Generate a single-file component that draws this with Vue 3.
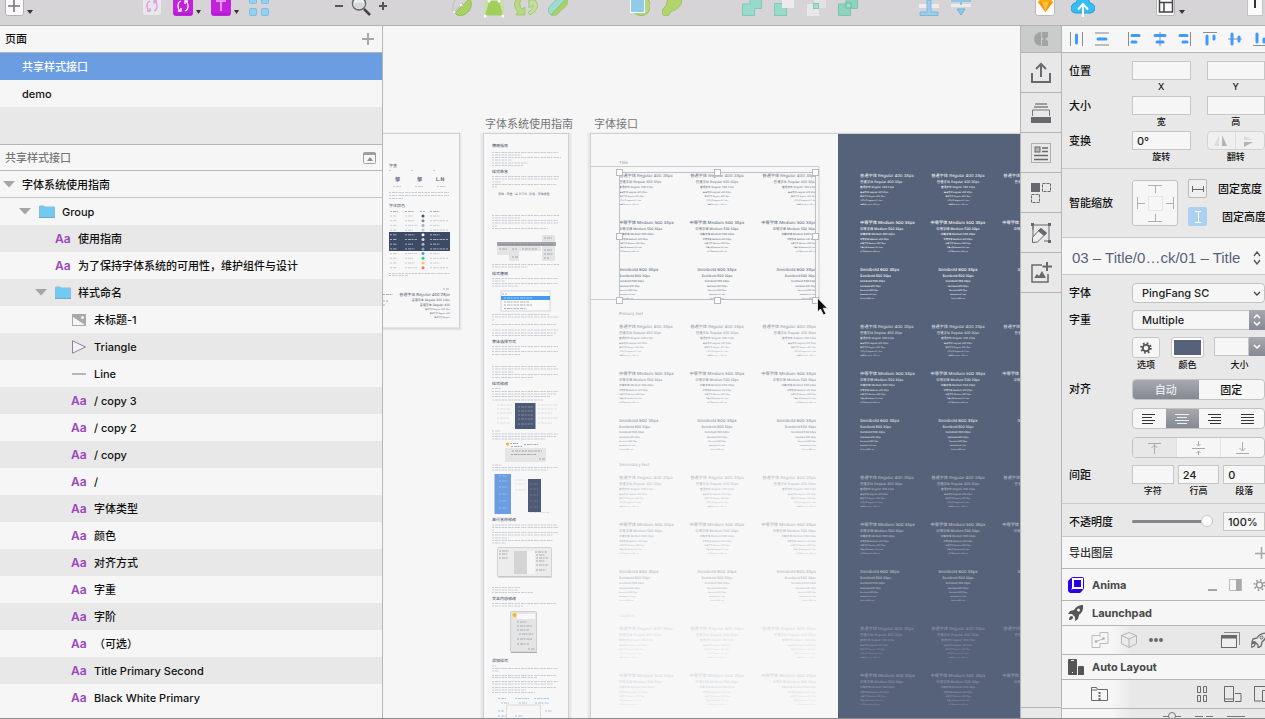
<template>
  <div class="ventana">
    <!-- Barra de herramientas superior -->
    <header class="barra">
      <div class="grupo g-insertar">
        <button title="Insert">
          <svg width="29" height="18">
            <rect x="0.5" y="-6" width="18" height="21.500" rx="2" fill="#fafafa" stroke="#b4b2b5" />
            <path d="M9 0v12M3 6h12" stroke="#77777a" stroke-width="1.600" />
            <path d="M22 10h6l-3 4z" fill="#333" />
          </svg>
        </button>
      </div>
      <div class="grupo g-simbolos">
        <button title="Symbol" disabled>
          <svg width="20" height="18">
            <rect x="0" y="-6" width="18" height="21" rx="2" fill="#e9e7ea" />
            <g fill="none" stroke="#d897dc" stroke-width="1.300">
              <path d="M7 1q-3 1-3 5q0 3 2 5M4 11h3V8M11 11q3-1 3-5q0-3-2-5M14 1h-3v3" />
            </g>
          </svg>
        </button>
        <button title="Create symbol">
          <svg width="28" height="18">
            <rect x="0" y="-6" width="20" height="22" rx="3" fill="#c322dc" />
            <path d="M1 14h18" stroke="#a31abc" />
            <path d="M8 1q-3 1-3 5q0 3 2 5M5 11h3V8M12 11q3-1 3-5q0-3-2-5M15 1h-3v3" fill="none" stroke="#fff" stroke-width="1.300" />
            <path d="M23 10h5l-2.500 4z" fill="#333" />
          </svg>
        </button>
        <button title="Text style">
          <svg width="28" height="18">
            <rect x="0" y="-6" width="20" height="22" rx="3" fill="#c322dc" />
            <path d="M1 14h18" stroke="#a31abc" />
            <path d="M5 1h10M10 1v10" stroke="#f0b8f6" stroke-width="1.500" />
            <path d="M23 10h5l-2.500 4z" fill="#333" />
          </svg>
        </button>
        <button title="Grid">
          <svg width="20" height="18" fill="#93d0ef" stroke="#77bfe4">
            <rect x="0.500" y="-4" width="7" height="7.500" rx="1" />
            <rect x="12.500" y="-4" width="7" height="7.500" rx="1" />
            <rect x="0.500" y="8.500" width="7" height="7" rx="1" />
            <rect x="12.500" y="8.500" width="7" height="7" rx="1" />
          </svg>
        </button>
      </div>
      <div class="grupo g-zoom">
        <button title="Zoom out"><svg width="8" height="18"><path d="M0 6h8" stroke="#555" stroke-width="2" /></svg></button>
        <button title="Zoom">
          <svg width="20" height="18">
            <circle cx="8" cy="3.500" r="6.500" fill="#eceef0" stroke="#666" stroke-width="1.500" />
            <path d="M2 4q6-3 12 0q-1 5-6 5q-5 0-6-5" fill="#d5d9dc" />
            <path d="M13 9l6 6" stroke="#444" stroke-width="2.500" />
          </svg>
        </button>
        <button title="Zoom in"><svg width="8" height="18"><path d="M0 6h8M4 2v8" stroke="#555" stroke-width="2" /></svg></button>
      </div>
      <div class="grupo g-formas">
        <button title="Edit">
          <svg width="20" height="18">
            <path d="M3 13L18 -2Q21 5 17 11Q12 17 5 15z" fill="#a9d165" stroke="#93bf54" />
            <path d="M1 11Q0 4 3 0M2 12l9-9" fill="none" stroke="#bbb" />
            <circle cx="2" cy="12" r="1.500" fill="#fff" stroke="#bbb" stroke-width="0.500" />
            <circle cx="9" cy="5" r="1.500" fill="#fff" stroke="#bbb" stroke-width="0.500" />
          </svg>
        </button>
        <button title="Transform">
          <svg width="20" height="18">
            <rect x="0" y="-2" width="20" height="17" fill="#c9ddb0" />
            <path d="M1 15.500L5 1h10l4 14.500z" fill="#a2cf5c" />
            <g fill="#fff"><circle cx="1" cy="16" r="1.500" /><circle cx="19" cy="16" r="1.500" /><circle cx="5" cy="1" r="1.500" /><circle cx="15" cy="1" r="1.500" /></g>
          </svg>
        </button>
        <button title="Rotate">
          <svg width="20" height="18" class="abierto">
            <path d="M2 -3Q-5 5 2 12L0 15h9V7L6 9Q2 5 5 -1z" fill="#b6d981" stroke="#94c24e" stroke-width="0.700" />
            <path d="M13 0h6Q26 8 14 15l-2-3Q18 9 17 5l-4 3z" fill="#c4dfa0" stroke="#94c24e" stroke-width="0.700" />
          </svg>
        </button>
        <button title="Flatten">
          <svg width="20" height="18">
            <path d="M1 13Q-2 8 7 1L12 -5L20 -3L3 15z" fill="#9cdcd0" stroke="#78bdb0" stroke-width="0.700" />
            <path d="M3 15L20 -3Q21 6 13 10Q9 17 3 15" fill="#a9d165" stroke="#93bf54" stroke-width="0.700" />
          </svg>
        </button>
      </div>
      <div class="grupo g-mascara">
        <button title="Mask">
          <svg width="20" height="18">
            <circle cx="11" cy="6" r="9.500" fill="#b4d77c" stroke="#93bf54" />
            <rect x="0.500" y="-5" width="14" height="17.500" fill="#91cbea" stroke="#fff" />
          </svg>
        </button>
        <button title="Scale">
          <svg width="20" height="18"><path d="M6 -3h13q3 8-6 13q-5 1-6 5Q1 17 0 13Q0 8 4 6z" fill="#b1d46f" stroke="#93bf54" stroke-width="0.700" /></svg>
        </button>
      </div>
      <div class="grupo g-booleanas">
        <button title="Union"><svg width="20" height="18"><path d="M8 -4h11.500V8.500H12.500V15.500H.5V4H8z" fill="#98d9c9" stroke="#7fcab8" /></svg></button>
        <button title="Subtract"><svg width="20" height="18"><rect x="0.500" y="3.500" width="12" height="12" fill="#98d9c9" stroke="#7fcab8" /><rect x="8" y="-4" width="12" height="12" fill="#ebebeb" /></svg></button>
        <button title="Intersect"><svg width="20" height="18"><rect x="1" y="4" width="12" height="12" fill="#e8e8e8" /><rect x="8" y="-4" width="12" height="12" fill="#e2e2e2" /><rect x="7.500" y="3.500" width="5" height="5" fill="#a8dccf" stroke="#7fcab8" /></svg></button>
        <button title="Difference"><svg width="20" height="18"><path d="M8 -4h11.500V8.500H12.500V15.500H.5V4H8z" fill="#8fd3be" stroke="#7cc6ac" /><path d="M8 3h5v5H8z" fill="#a5ddce" stroke="#68b99f" /></svg></button>
      </div>
      <div class="grupo g-orden">
        <button title="Forward"><svg width="20" height="18"><path d="M0 4h20v4H0z" fill="#ececec" /><path d="M8 0h4v12h7v3.500H1V12h7z" fill="#9dcdeb" stroke="#7db9dd" /></svg></button>
        <button title="Backward"><svg width="20" height="18"><path d="M0 4h20v3H0z" fill="#ececec" /><path d="M0 1h20M10 0v5" stroke="#8fc6e8" stroke-width="2" /><path d="M6 9h8l-4 6z" fill="#8fc6e8" stroke="#70b1da" /></svg></button>
      </div>
      <div class="grupo g-nube">
        <button title="Sketch">
          <svg width="20" height="18">
            <rect x="0.500" y="-6" width="19" height="21.500" rx="2" fill="#fafafa" stroke="#bbb9bc" />
            <path d="M3 2L6 -2h9l3 4l-7.500 10z" fill="#fdad00" /><path d="M3 2h15l-7.500 10z" fill="#f7941d" /><path d="M7 2h7l-3.500 9z" fill="#fdc33a" />
          </svg>
        </button>
        <button title="Cloud">
          <svg width="24" height="18">
            <path d="M5 13Q0 13 0 8Q1 3 5 3Q7 -4 13 -3Q18 -2 19 3Q24 4 24 9Q23 13 19 13z" fill="#36bdf6" stroke="#239fdb" />
            <path d="M12 17V5M7 9.500L12 4l5 5.500" fill="none" stroke="#fff" stroke-width="2" />
          </svg>
        </button>
      </div>
      <div class="grupo g-vista">
        <button title="View">
          <svg width="30" height="18">
            <rect x="0.500" y="-6" width="18" height="21.500" rx="2" fill="#fafafa" stroke="#b4b2b5" />
            <path d="M3.500 -2v14h13V-2M3.500 2.500h13M8 2v10" fill="none" stroke="#444" stroke-width="1.500" />
            <path d="M23 10h6l-3 4z" fill="#333" />
          </svg>
        </button>
      </div>
      <div class="grupo g-exportar">
        <button title="Export">
          <svg width="18" height="18"><rect x="0.500" y="-6" width="15" height="21.500" fill="#fafafa" stroke="#c4c2c5" /><path d="M8 -2v10" stroke="#333" stroke-width="2" /></svg>
        </button>
      </div>
    </header>

    <main class="cuerpo">
      <!-- Panel izquierdo: páginas y capas -->
      <aside class="lateral">
        <div class="cabecera">
          <span>页面</span>
          <button title="Add page"><svg width="12" height="12"><path d="M6 0v12M0 6h12" stroke="#a8a8a8" stroke-width="2" /></svg></button>
        </div>
        <ul class="paginas">
          <li class="activa">共享样式接口</li>
          <li>demo</li>
        </ul>
        <div class="cabecera capas-cabecera">
          <span>共享样式接口</span>
          <button title="Collapse">
            <svg width="13" height="12"><rect x="0.500" y="0.500" width="12" height="11" rx="1" fill="none" stroke="#a0a0a0" /><path d="M0 2h13" stroke="#a0a0a0" stroke-width="2" /><path d="M4 9h6L7 5z" fill="#8e8e8e" /></svg>
          </button>
        </div>
        <ul class="capas">
          <li v-for="(capa, i) in capas" :key="i" class="capa" :class="['nivel-' + capa.nivel, { par: i > 1 && i % 2 === 0 }]">
            <span class="flecha"><svg v-if="capa.abierta" width="12" height="7"><path d="M0 0h12L6 6.500z" fill="#a5a5a5" /></svg></span>
            <span v-if="capa.tipo" class="icono">
              <svg v-if="capa.tipo === 'grupo'" width="16" height="13">
                <path d="M0.500 12V1H5l1 1h9.500v10z" fill="#71caf3" stroke="#8abfdc" /><path d="M0 12.500h16" stroke="#6aa9c8" />
              </svg>
              <svg v-else-if="capa.tipo === 'imagen'" width="16" height="12">
                <rect x="1" y="0" width="14" height="12" fill="#a9a9a9" /><path d="M2 3l12 8H2z" fill="#f6f6f6" /><circle cx="11.500" cy="3.500" r="1.500" fill="#f6f6f6" />
              </svg>
              <svg v-else-if="capa.tipo === 'triangulo'" width="16" height="14"><path d="M1.500 0.800v12.400L14.500 7z" fill="#f2f2f4" stroke="#8f7f9f" /></svg>
              <svg v-else-if="capa.tipo === 'linea'" width="16" height="2"><path d="M1 1h14" stroke="#a0a0a6" stroke-width="1.500" /></svg>
              <b v-else>Aa</b>
            </span>
            <span class="nombre">{{ capa.nombre }}</span>
          </li>
        </ul>
      </aside>

      <!-- Lienzo con las mesas de trabajo -->
      <section class="lienzo">
        <svg class="dibujo" width="100%" height="100%">
          <g transform="translate(-383 -26)">
            <text class="mesa-nombre" x="485" y="128">字体系统使用指南</text>
            <text class="mesa-nombre" x="594" y="128">字体接口</text>

            <!-- Mesa recortada por la izquierda -->
            <rect class="halo" x="370" y="134" width="90" height="195" />
            <rect class="mesa" x="370" y="133.500" width="89.500" height="194.500" />
            <g class="mini">
              <text x="389" y="166.500" font-size="4">字重</text>
              <path class="tenue" d="M389 170.500h3M411 170.500h3M433 170.500h3" />
              <text x="395" y="181" font-size="5" font-weight="700">邹</text>
              <text x="417" y="181" font-size="5" font-weight="700">邹</text>
              <text x="436" y="181" font-size="5" font-weight="700">L.N</text>
              <path class="tenue" d="M393 186.500h8M415 186.500h8M437 186.500h9M389 192.500h60M389 195.500h60M389 198.500h14M389 273.500h61M389 275.500h19" />
              <text x="389" y="207" font-size="4">字体颜色</text>
              <rect x="389" y="232" width="61" height="19" fill="#3c4a66" />
              <g v-for="(color, i) in colores" :key="color + i">
                <path class="tenue" :class="{ claro: i > 3 && i < 8 }" :stroke="i > 8 ? color : null" :d="`M390 ${216 + i * 4.7}h7M405 ${216 + i * 4.7}h${8 + (i % 3) * 2}M430 ${216 + i * 4.7}h${10 + (i % 2) * 8}`" />
                <circle cx="423" :cy="216 + i * 4.7" r="1.500" :fill="color" />
              </g>
              <path class="tenue fuerte" d="M390 211.500h8M405 211.500h9M420 211.500h5M430 211.500h10M443 289h6M383 294.500h10M383 301h5M383 305h2" />
              <g text-anchor="end">
                <text x="450" y="296" font-size="4">普通字体 Regular 400 28px</text>
                <text x="450" y="301" font-size="3">普通字体 Regular 400 24px</text>
                <text x="450" y="306" font-size="3">普通字体 Regular 400</text>
                <text x="450" y="310" font-size="2">普通字体 Regular 400 18px</text>
                <text x="450" y="314" font-size="2">普通字体 Regular 400</text>
                <text x="450" y="318" font-size="2">普通字体 Regular</text>
              </g>
            </g>

            <!-- Guía de uso -->
            <rect class="halo" x="482" y="134" width="88" height="620" />
            <rect class="mesa" x="483.500" y="133.500" width="85" height="620" />
            <g class="mini">
              <text v-for="t in titulos" :key="t.y" x="492" :y="t.y" font-size="4" font-weight="500">{{ t.texto }}</text>
              <path v-for="r in renglones" :key="r[0]" class="tenue" :d="`M492 ${r[0]}H${r[1]}`" />
              <text x="498" y="195" font-size="3">字体 · 字重 · 以 P/T/S · 颜色 · 字体类型</text>

              <path d="M497 243h14v12h-14zM509 243h10v18h-10zM519 243h22v8h-22zM542 235h13v26h-13z" fill="#e4e4e4" />
              <path d="M497 242h59v4h-59z" fill="#a3a5a8" />
              <path class="tenue fuerte" d="M499 244.500h54M499 249h8M512 249h5M522 249h16M544 238h8M544 250h8M544 254h9M544 258h5M512 257h6" />

              <rect x="501" y="291" width="49" height="20" fill="#f9f9f9" stroke="#d5d5d5" />
              <rect x="501" y="296" width="49" height="4" fill="#459bef" />
              <path class="tenue fuerte" d="M502 294h5M504 302h25M504 305h29M504 308.500h23" />
              <path class="tenue claro" d="M504 298h28" />

              <g>
                <rect x="515" y="403" width="20.500" height="26" fill="#4d5a75" />
                <path class="tenue claro bajo" d="M518 407h15M518 411h15M518 415h15M518 419h15M518 424h15" />
                <path class="tenue bajo" d="M497 405h15M497 409h14M497 413h15M497 418h12M497 423h14M538 405h20M538 409h19M538 413h14M538 418h20M538 423h14" />
              </g>

              <circle cx="507.500" cy="444" r="1.500" fill="#ffad18" />
              <path class="tenue fuerte" d="M510 443.500h8M511 446.500h11M524 444.500h14" />
              <rect x="505" y="448" width="41" height="14" fill="#e5e5e5" />
              <path class="tenue fuerte" d="M512 451h30M511 454.500h25M539 459h6" />

              <rect x="494.500" y="474" width="16.500" height="40" fill="#6b9ee0" />
              <path class="tenue claro bajo" d="M499 476h8M499 481h8M499 487h8M499 494h8M499 501h8M499 508h8" />
              <rect x="528" y="479" width="13" height="33" fill="#4d5a75" />
              <path class="tenue bajo" d="M515 480h11M515 484h11M515 490h11M530 512.500h20" />
              <path class="tenue bajo" d="M530 484h9M530 489h9M530 495h9M530 501h9M530 507h9" />

              <rect x="497.500" y="547.500" width="54" height="29" rx="1" fill="#ececec" stroke="#d2d2d2" />
              <rect x="514" y="551" width="13" height="23" fill="#d4d4d4" />
              <path d="M527 551h8v23h-8z" fill="#f6f6f6" />
              <path class="tenue fuerte" d="M499 551h10M499 554h8M499 558h9M535 552h12M536 555h9M536 558h12M536 561h9M536 565h12M536 570h10" />
              <path d="M498 577h54" stroke="#bcbcbc" />

              <rect x="510.500" y="611.500" width="26" height="40.500" rx="1" fill="#e5e5e5" stroke="#cfcfcf" />
              <rect x="517" y="614" width="18" height="5" fill="#f8f8f8" />
              <circle cx="514.500" cy="615" r="2" fill="#f5b819" />
              <path class="tenue fuerte" d="M517 622h10M517 626h16M517 630h12M519 634h14M517 639h15M517 644h12M528 649h7" />
              <path d="M511 652.500h26" stroke="#aaa" />

              <path class="tenue azul" d="M498 698.500h8M515 698.500h14M534 698.500h15M501 703h8M519 703h8M535 703h14M498 711h6M545 711h7M498 716h9M515 716h8" />
              <path d="M506.500 718v-13h34v13" fill="none" stroke="#dcdcdc" />
            </g>

            <!-- Mesa de estilos de texto, a escala 1:9 -->
            <rect class="halo" x="589" y="134" width="900" height="620" />
            <rect class="mesa" x="590.500" y="133.500" width="900" height="620" />
            <rect x="838" y="134" width="900" height="620" fill="#56627a" />
            <svg class="tipos" x="591" y="134" width="900" height="600" viewBox="0 0 8100 5400">
              <g v-for="(s, i) in secciones" :key="s.nombre">
                <text :x="252" :y="268 + i * 1359" font-size="38" :fill="s.etiqueta">{{ s.nombre }}</text>
                <g v-for="c in columnas" :key="c.x" :text-anchor="c.ancla" :fill="c.oscura ? '#fff' : '#46536b'" :opacity="c.oscura ? s.claridad : s.opacidad">
                  <template v-for="(f, j) in familias" :key="f.nombre">
                    <text
                      v-for="(t, k) in tamanos.slice(0, c.filas)"
                      :key="t.px"
                      :x="c.x"
                      :y="386 + i * 1359 + j * 423 + t.y"
                      :font-size="t.px"
                      :font-weight="f.peso"
                    >{{ f.nombre }} {{ t.px }}px</text>
                  </template>
                </g>
              </g>
            </svg>

            <!-- Guías y selección -->
            <path d="M591 166.500h228v133H591" fill="none" stroke="#c9ccd2" />
            <rect x="619.500" y="172.500" width="196" height="127" fill="none" stroke="#bcbfc6" />
            <rect v-for="(m, i) in manijas" :key="i" :x="m[0]" :y="m[1]" width="6" height="6" fill="#fdfdfd" stroke="#b9b9bd" />
            <path d="M817.500 298v14l3-3l3 6l2.500-1.200l-2.800-5.600h4.300z" fill="#0a0a0a" stroke="#fff" stroke-width="0.800" />
          </g>
        </svg>
      </section>

      <!-- Columna de complementos -->
      <nav class="plugins">
        <button class="marca" title="Craft"><svg width="16" height="16"><path d="M8 1v14A7 7 0 0 1 8 1M9 1h6v5l-3 2l3 2v5H9V9l2-1l-2-1z" fill="#a3a3a3" /></svg></button>
        <button title="Upload"><svg width="22" height="22" fill="none" stroke="#68696c" stroke-width="2"><path d="M2 11v9h18v-9M11 15V2M6 7l5-5l5 5" /></svg></button>
        <button title="Stack"><svg width="22" height="22"><path d="M5 2h12M4 5h14" stroke="#9c9c9e" stroke-width="1.800" /><path d="M2.500 14V8h17v6" fill="none" stroke="#77787b" /><path d="M1 15h20v6H1z" fill="#68696c" /></svg></button>
        <button title="Data"><svg width="22" height="22"><rect x="1.500" y="1.500" width="19" height="19" fill="none" stroke="#77787b" stroke-dasharray="1 1" /><rect x="5" y="5" width="5" height="5" fill="#b5b5b6" stroke="#68696c" /><path d="M12 6h6M12 9.500h6M4 13.500h14M4 17.500h14" stroke="#68696c" stroke-width="1.300" /></svg></button>
        <button title="Duplicate"><svg width="22" height="22"><path d="M1 1h9v9H1z" fill="#68696c" /><path d="M12.500 1.500h8v8h-8zM1.500 12.500h8v8h-8z" fill="none" stroke="#68696c" stroke-dasharray="3 1" /></svg></button>
        <button title="Edit"><svg width="22" height="22"><path d="M3 8V3h16v16h-5M3 3v12" fill="none" stroke="#68696c" /><path d="M1 1h3v3H1zM18 1h3v3h-3zM18 18h3v3h-3z" fill="#68696c" /><path d="M2.500 20.500v-5l8-9l6 4.500l-9 9z" fill="#eee" stroke="#68696c" /><path d="M8 9l3-3l6 5l-3 3z" fill="#68696c" /></svg></button>
        <button title="Add image"><svg width="22" height="22"><path d="M12 3H2v17h16v-8" fill="none" stroke="#68696c" stroke-width="1.500" /><path d="M17 0v9M12.500 4.500H22" stroke="#68696c" stroke-width="2" /><path d="M4 16l3-4l2 2l3-5l4 7z" fill="#68696c" /></svg></button>
        <div class="pie"></div>
      </nav>

      <!-- Inspector -->
      <aside class="inspector">
        <div class="alinear">
          <button title="Distribute horizontally"><svg width="14" height="14"><path d="M0.500 0v14M12.500 0v14" stroke="#8e8e90" /><path d="M6.500 3v8" class="trazo" /></svg></button>
          <button title="Distribute vertically"><svg width="14" height="14"><path d="M0 1h14M0 13h14" stroke="#aaa" stroke-width="1.500" /><path d="M3 7h8" class="trazo" /></svg></button>
          <i></i>
          <button title="Align left"><svg width="14" height="14"><path d="M0.500 0v14" stroke="#8e8e90" /><path d="M4 3.500h7M4 10h4" class="trazo" /></svg></button>
          <button title="Align center"><svg width="14" height="14"><path d="M7 0v14" stroke="#8e8e90" /><path d="M2 3.500h10M4 10h6" class="trazo" /></svg></button>
          <button title="Align right"><svg width="14" height="14"><path d="M12.500 0v14" stroke="#8e8e90" /><path d="M2 3.500h7M5 10h4" class="trazo" /></svg></button>
          <button title="Align top"><svg width="14" height="14"><path d="M0 0.500h14" stroke="#8e8e90" /><path d="M4 4v8M11 4v3" class="trazo" /></svg></button>
          <button title="Align middle"><svg width="14" height="14"><path d="M0 7h14" stroke="#8e8e90" /><path d="M4 2v10M11 5v4" class="trazo" /></svg></button>
          <button title="Align bottom"><svg width="14" height="14"><path d="M0 13.500h14" stroke="#8e8e90" /><path d="M4 2v8M11 7v3" class="trazo" /></svg></button>
        </div>

        <div class="seccion posicion">
          <div class="fila">
            <span class="rotulo">位置</span>
            <label class="campo"><input type="text" /><small>X</small></label>
            <label class="campo"><input type="text" /><small>Y</small></label>
          </div>
          <div class="fila">
            <span class="rotulo">大小</span>
            <label class="campo"><input type="text" /><small>宽</small></label>
            <label class="campo"><input type="text" /><small>高</small></label>
          </div>
          <div class="fila">
            <span class="rotulo">变换</span>
            <label class="campo"><input type="text" value="0°" /><small>旋转</small></label>
            <div class="campo">
              <div class="voltear">
                <button title="Flip horizontal"><svg width="14" height="12"><path d="M5 0v11H0z" fill="#dcdcdc" /><path d="M8 0v11h5z" fill="#b4b4b4" /></svg></button>
                <button title="Flip vertical"><svg width="12" height="12"><path d="M0 5h9L0 1z" fill="#dcdcdc" /><path d="M0 7h9l-9 5z" fill="#b4b4b4" /></svg></button>
              </div>
              <small>翻转</small>
            </div>
          </div>
        </div>

        <div class="seccion escala">
          <span class="rotulo">智能缩放</span>
          <button class="anclas" title="Pin edges">
            <svg width="44" height="44" fill="none" stroke="#b0b0b0"><rect x="15.500" y="15.500" width="14" height="14" stroke="#e6e6e6" /><path d="M15 4.500h14M22.500 5v7M15 40.500h14M22.500 33v7M4.500 16v12M5 22.500h7M40.500 16v12M33 22.500h7" /></svg>
          </button>
          <div class="fijar">
            <div><button title="Fix width"><svg width="14" height="14"><path d="M1.500 4v6M12.500 4v6M2 7.500h10" stroke="#666" /></svg></button><span>固定宽度</span></div>
            <div><button class="puesto" title="Fix height"><svg width="14" height="14"><path d="M4 1.500h6M4 12.500h6M7.500 2v10" stroke="#fff" /></svg></button><span class="alto">固定高度</span></div>
          </div>
        </div>

        <button class="estilo">
          <span>03 – Title/0…ck/01 – Title</span>
          <svg width="8" height="14"><path d="M1 5l3-4l3 4M1 9l3 4l3-4" fill="none" stroke="#555" stroke-width="1.300" /></svg>
        </button>

        <div class="seccion texto">
          <div class="fila">
            <label class="rotulo" for="fuente">字体</label>
            <div class="lista">
              <select id="fuente"><option>PingFang SC</option></select>
              <svg class="chevron" width="8" height="6"><path d="M1 1l3 3l3-3" fill="none" stroke="#444" stroke-width="1.300" /></svg>
            </div>
          </div>
          <div class="fila">
            <label class="rotulo" for="peso">字重</label>
            <div class="lista">
              <select id="peso" class="junto"><option>Multiple</option></select>
              <span class="pulsador"><svg width="8" height="14"><path d="M1 5l3-3l3 3M1 9l3 3l3-3" fill="none" stroke="#fff" stroke-width="1.500" /></svg></span>
            </div>
          </div>
          <div class="fila opciones">
            <span class="rotulo"></span>
            <div class="campo opcion">
              <button title="Options"><svg width="12" height="12"><circle cx="6" cy="6" r="4.800" fill="none" stroke="#555" stroke-width="2" stroke-dasharray="1.800 1.970" /><circle cx="6" cy="6" r="3.200" fill="none" stroke="#555" stroke-width="1.800" /></svg></button>
              <small>选项</small>
            </div>
            <div class="campo color"><button title="Color"><i></i></button><small>颜色</small></div>
            <div class="campo tamano">
              <div class="lista"><input id="tamano" type="text" /><span class="pulsador"><svg width="8" height="6"><path d="M1 1l3 3l3-3" fill="none" stroke="#fff" stroke-width="1.500" /></svg></span></div>
              <label for="tamano"><small>大小</small></label>
            </div>
          </div>
          <div class="fila">
            <span class="rotulo">对齐</span>
            <div class="segmentos">
              <div class="segmento"><button class="puesto">自动</button><button>固定</button></div>
              <div class="segmento">
                <button title="Left"><svg width="14" height="12"><path d="M0 1.500h13M0 4.500h10M0 7.500h13M0 10.500h11" stroke="#333" /></svg></button>
                <button class="puesto" title="Center"><svg width="14" height="12"><path d="M0 1.500h14M2 4.500h10M0 7.500h14M2 10.500h10" stroke="#eee" /></svg></button>
                <button title="Right"><svg width="14" height="12"><path d="M0 1.500h13M3 4.500h10M0 7.500h13M2 10.500h11" stroke="#333" /></svg></button>
                <button title="Justify"><svg width="14" height="12"><path d="M0 1.500h13M0 4.500h13M0 7.500h13M0 10.500h13" stroke="#333" /></svg></button>
              </div>
              <div class="segmento apagado">
                <button title="Top"><svg width="14" height="14"><path d="M0 2.500h13M6.500 13V3M3.500 7l3-3l3 3" /></svg></button>
                <button title="Middle"><svg width="14" height="14"><path d="M0 7.500h13M6.500 0v5M6.500 10v5M4.500 3l2 2l2-2M4.500 12l2-2l2 2" /></svg></button>
                <button title="Bottom"><svg width="14" height="14"><path d="M0 12.500h13M6.500 1v9M3.500 7l3 3l3-3" /></svg></button>
              </div>
            </div>
          </div>
          <div class="fila espaciado">
            <span class="rotulo">间距</span>
            <label class="campo"><input type="text" /><small>字符</small></label>
            <label class="campo"><input type="text" value="24" /><small>行高</small></label>
            <label class="campo"><input type="text" value="0" /><small>段落</small></label>
          </div>
        </div>

        <div class="seccion opacidad">
          <label class="rotulo" for="opacidad">不透明度</label>
          <input id="opacidad" type="range" min="0" max="100" value="100" />
          <input type="text" value="100%" aria-label="不透明度" />
        </div>

        <div class="linea exportar"><span>导出图层</span><button title="Add export"><svg width="14" height="12"><path d="M6.500 0v12M0 6.500h14" stroke="#a5a5a5" stroke-width="1.500" /></svg></button></div>

        <div class="linea anima">
          <svg width="16" height="16"><path d="M3 1v11l1 1h11l-3 3H2l-2-2V4z" fill="#2900e8" /><rect x="3.500" y="0.500" width="12" height="12" rx="1" fill="#fff" stroke="#2900e8" /><path d="M6 3h7v7H6z" fill="#2900e8" /></svg>
          <b>Anima</b>
          <div class="acciones">
            <button title="Minimize"><svg width="10" height="12"><path d="M0 11h9" stroke="#a5a5a5" stroke-width="2" /></svg></button>
            <button title="Panel"><svg width="13" height="12"><rect x="0.500" y="0.500" width="12" height="11" fill="#f6f6f6" stroke="#bbb" /><path d="M7 0h5v12H7z" fill="#a9a9a9" /></svg></button>
            <button title="Settings"><svg width="13" height="12"><circle cx="6.500" cy="6" r="3" fill="none" stroke="#999" stroke-width="1.500" /><circle cx="6.500" cy="6" r="5" fill="none" stroke="#999" stroke-width="2" stroke-dasharray="1.500 2.427" /></svg></button>
          </div>
        </div>
        <div class="linea">
          <svg width="16" height="16"><path d="M15 0q-6 0-9 5L2 6L0 9l4 0l3 3l0 4l3-2l1-4q5-4 4-10M4 11q-3 0-3 4q4 0 4-3z" fill="#555" /><circle cx="10.500" cy="5" r="1.500" fill="#f6f6f6" /></svg>
          <b>Launchpad</b>
        </div>
        <div class="utiles">
          <button title="Link"><svg width="18" height="16" fill="none" stroke="#bbb"><path d="M9 5V0.500h8v11H9M9 3.500H1v12h8v-4M5 9.500l8-3" /><circle cx="5" cy="9.500" r="1" fill="#aaa" /><circle cx="12.500" cy="6.500" r="1" fill="#aaa" /></svg></button>
          <button title="Component"><svg width="18" height="16" fill="none" stroke="#b5b5b5"><path d="M9 0.500l7.500 3v8l-7.500 4l-7.500-4v-8zM1.500 3.500l7.500 3.500l7.500-3.500M9 7v8" /></svg></button>
          <button title="More"><svg width="14" height="6" fill="#68696c"><circle cx="2" cy="3" r="2" /><circle cx="7" cy="3" r="2" /><circle cx="12" cy="3" r="2" /></svg></button>
          <div class="final">
            <button title="Preview"><svg width="19" height="16"><path d="M3 0.500h15.500V13" fill="none" stroke="#8b8b8d" /><rect x="0.500" y="3.500" width="15" height="12" fill="#eee" stroke="#68696c" /><path d="M0 5h16" stroke="#68696c" stroke-width="3" /></svg></button>
            <button title="Launch"><svg width="16" height="16"><path d="M15 1q-6 0-9 5L2 7L1 10h3l3 3v3l3-2l1-4q5-4 4-9M3 11q-3 0-3 4q4 0 4-3z" fill="none" stroke="#68696c" stroke-width="1.300" /><circle cx="10.500" cy="5.500" r="1.500" fill="none" stroke="#68696c" /></svg></button>
          </div>
        </div>
        <div class="linea">
          <svg width="16" height="16"><path d="M1 0h7q1 0 1 1v15H1q-1 0-1-1V1q0-1 1-1zM11 7h4q1 0 1 1v8h-6V8q0-1 1-1z" fill="#555" /><path d="M3 1.500h3M4 13.500h1" stroke="#f6f6f6" /></svg>
          <b>Auto Layout</b>
        </div>
        <div class="utiles">
          <button title="Folder"><svg width="17" height="14"><path d="M0.500 13.500v-13h5l1 2h10v11zM0 3h6" fill="none" stroke="#68696c" /><path d="M8.500 5v8" stroke="#68696c" stroke-width="2" stroke-dasharray="2 1" /></svg></button>
          <div class="final disposicion">
            <button title="Grid"><svg width="12" height="16" fill="none" stroke="#68696c"><path d="M1.500 0.500h3v6h-3zM7.500 0.500h3v6h-3zM1.500 9.500h3v6h-3zM7.500 9.500h3v6h-3z" /></svg></button>
            <button title="Devices"><svg width="18" height="16" fill="none" stroke="#68696c"><path d="M0.500 0.500h9v15h-9zM11 7.500h6v8h-6M0 13h10" /></svg></button>
            <button title="Responsive"><svg width="17" height="16" fill="none" stroke="#68696c"><path d="M0.500 0.500h14v3M0.500 0v15h7M8.500 4.500h8v11h-8z" /></svg></button>
          </div>
        </div>
        <div class="utiles resto">
          <div class="final">
            <svg width="18" height="12" fill="none" stroke="#77787b"><path d="M0 7.500h18" /><circle cx="9" cy="7" r="3.500" fill="#e8e8e8" /></svg>
            <svg width="18" height="12" fill="none" stroke="#77787b"><path d="M0 7.500h8M11 7.500h8" /></svg>
            <svg width="18" height="12" fill="none" stroke="#77787b"><path d="M0 7.500h18" /></svg>
          </div>
        </div>
      </aside>
    </main>
  </div>
</template>

<script setup>
// Capas del panel izquierdo
const capas = [
  { nombre: '字体系统使用指南', nivel: 0, abierta: true },
  { nombre: 'Group', nivel: 1, tipo: 'grupo', abierta: true },
  { nombre: '使用指南', nivel: 2, tipo: 'texto' },
  { nombre: '为了保持字体系统的可用性，维护组件与设计', nivel: 2, tipo: 'texto' },
  { nombre: '样式命名', nivel: 2, tipo: 'grupo', abierta: true },
  { nombre: '未标题-1', nivel: 3, tipo: 'imagen' },
  { nombre: 'Triangle', nivel: 3, tipo: 'triangulo' },
  { nombre: 'Line', nivel: 3, tipo: 'linea' },
  { nombre: '/ copy 3', nivel: 3, tipo: 'texto' },
  { nombre: '/ copy 2', nivel: 3, tipo: 'texto' },
  { nombre: '/ copy', nivel: 3, tipo: 'texto' },
  { nombre: '/', nivel: 3, tipo: 'texto' },
  { nombre: '字体类型', nivel: 3, tipo: 'texto' },
  { nombre: '颜色', nivel: 3, tipo: 'texto' },
  { nombre: '对齐方式', nivel: 3, tipo: 'texto' },
  { nombre: '字重', nivel: 3, tipo: 'texto' },
  { nombre: '字阶', nivel: 3, tipo: 'texto' },
  { nombre: '（可选）', nivel: 3, tipo: 'texto' },
  { nombre: 'Title Primary Second', nivel: 3, tipo: 'texto' },
  { nombre: 'Black White Primary', nivel: 3, tipo: 'texto' }
]

const colores = ['#46536b', '#7a8496', '#aab0ba', '#c5c8cd', '#fff', '#ddd', '#b3bac6', '#8f99aa', '#459bef', '#1fd67a', '#ffc266', '#ff6b6b']

// Títulos y renglones de la guía de uso
const titulos = [
  { y: 147, texto: '使用指南' },
  { y: 173, texto: '样式命名' },
  { y: 275, texto: '样式使用' },
  { y: 343, texto: '字体选择方式' },
  { y: 385, texto: '样式修改' },
  { y: 521, texto: '单行名称修改' },
  { y: 600, texto: '文本内容修改' },
  { y: 662, texto: '添加样式' }
]
const renglones = [
  [152.5, 558], [155, 522], [157.5, 561], [160, 512], [163, 528], [165.5, 523],
  [176.5, 559], [179, 558], [182, 501], [184.5, 556], [187, 497],
  [215.5, 559], [218, 520], [220.5, 558], [223, 558], [226, 497], [228.5, 548],
  [264.5, 560], [267, 528], [278.5, 558], [281, 505], [283.5, 558], [286, 518],
  [314.5, 549], [317, 558], [320, 494], [324.5, 556], [330, 558], [333, 556], [335.5, 553],
  [346.5, 558], [349, 520], [351.5, 558], [354.5, 521],
  [366.5, 556], [369, 558], [372, 514], [374.5, 558], [377.5, 533],
  [388.5, 501], [391.5, 558], [394, 556], [396.5, 550], [400, 543],
  [431, 500], [434, 558], [436.5, 556], [439, 545], [465, 502], [467.5, 558], [470, 548],
  [525, 557], [527.5, 558], [530, 494], [532.5, 558], [535, 553], [538, 509], [540.5, 553], [543, 506],
  [587.5, 520], [590, 518], [592.5, 533], [603.5, 556], [606, 523],
  [666, 496], [668.5, 558], [671, 499], [675.5, 556], [677.5, 537], [681.5, 558], [684, 553], [687.5, 556], [690, 526], [692.5, 535]
]

// Mesa de estilos de texto
const secciones = [
  { nombre: 'Title', opacidad: 0.8, claridad: 0.95, etiqueta: '#8d93a0' },
  { nombre: 'Primary text', opacidad: 0.6, claridad: 0.8, etiqueta: '#a0a4ae' },
  { nombre: 'Secondary text', opacidad: 0.38, claridad: 0.55, etiqueta: '#b0b3bb' },
  { nombre: 'Caption', opacidad: 0.18, claridad: 0.32, etiqueta: '#dcdde0' }
]
const familias = [
  { nombre: '普通字体 Regular 400', peso: 400 },
  { nombre: '中等字体 Medium 500', peso: 500 },
  { nombre: 'Semibold 600', peso: 500 }
]
const tamanos = [
  { px: 38, y: 0 }, { px: 30, y: 52 }, { px: 24, y: 99 }, { px: 20, y: 143 },
  { px: 18, y: 183 }, { px: 16, y: 219 }, { px: 14, y: 255 }
]
const columnas = [
  { x: 252, ancla: 'start' },
  { x: 1134, ancla: 'middle' },
  { x: 2025, ancla: 'end' },
  { x: 2421, ancla: 'start', oscura: true },
  { x: 3303, ancla: 'middle', oscura: true },
  { x: 4194, ancla: 'end', oscura: true, filas: 2 }
]

// Manijas de la selección
const manijas = [[616.5, 169.5], [714.5, 169.5], [812.5, 169.5], [616.5, 233.5], [812.5, 233.5], [616.5, 297.5], [714.5, 297.5], [812.5, 297.5]]
</script>

<style>
body {
  margin: 0;
  overflow: hidden;
}
</style>

<style scoped>
.ventana {
  display: flex;
  flex-direction: column;
  height: 100vh;
  box-sizing: border-box;
  border-bottom: 1px solid #8c8c92;
  overflow: hidden;
  background: #f6f6f6;
  color: #111;
  font: 500 11px/16px Inter, "Noto Sans CJK SC", sans-serif;
}

button {
  display: flex;
  align-items: center;
  justify-content: center;
  padding: 0;
  border: none;
  background: none;
  color: inherit;
  font: inherit;
}

svg { display: block; flex: none; }
ul { list-style: none; margin: 0; padding: 0; }

/* Barra superior */
.barra {
  display: flex;
  flex: none;
  align-items: flex-start;
  height: 25px;
  background: #d6d4d7;
  border-bottom: 1px solid #b3b1b4;
  overflow: hidden;
}
.grupo { display: flex; flex: none; gap: 12px; }
.abierto { overflow: visible; }
.g-insertar { margin-left: 5px; }
.g-simbolos { margin-left: 109px; gap: 10px; }
.g-zoom { margin-left: 66px; gap: 8px; }
.g-formas { margin-left: 65px; }
.g-mascara { margin-left: 62px; }
.g-booleanas { margin-left: 60px; }
.g-orden { margin-left: 61px; }
.g-nube { margin-left: 64px; gap: 16px; }
.g-vista { margin-left: 61px; }
.g-exportar { margin-left: 61px; }

.cuerpo { display: flex; flex: 1; min-height: 0; }

/* Panel izquierdo */
.lateral {
  display: flex;
  flex-direction: column;
  flex: none;
  width: 382px;
  border-right: 1px solid #b5b5b5;
  overflow: hidden;
}
.cabecera {
  display: flex;
  flex: none;
  align-items: center;
  justify-content: space-between;
  height: 26px;
  padding: 0 8px 0 5px;
  border-bottom: 1px solid #b5b5b5;
}
.capas-cabecera { height: 25px; padding-right: 6px; border-top: 1px solid #b5b5b5; color: #777; }
.paginas { flex: none; padding-bottom: 37px; background: #e8e8e8; }
.paginas li { padding: 2px 0 0 22px; line-height: 25px; background: #f6f6f6; }
.paginas .activa { background: #6a9de2; color: #fff; }
.capas { flex: 1; min-height: 0; overflow: hidden; }
.capa { display: flex; align-items: center; height: 27px; white-space: nowrap; }
.capa.par { background: #e8e8e8; }
.flecha { width: 20px; flex: none; }
.icono { width: 16px; margin-right: 7px; flex: none; }
.icono b { font-size: 12px; font-weight: 600; color: #9a45be; }
.nivel-0 { box-sizing: border-box; padding-top: 1px; padding-left: 3px; border-bottom: 1px solid #c6c6c6; }
.nivel-0 .flecha { width: 19px; }
.nivel-1 { padding-left: 19px; }
.nivel-2 { padding-left: 35px; }
.nivel-3 { padding-left: 51px; }

/* Lienzo */
.lienzo { position: relative; flex: 1; min-width: 0; overflow: hidden; }
.dibujo { position: absolute; inset: 0; }
.mesa-nombre { font-weight: 400; fill: #777; }
.halo { fill: none; stroke: #e7e7e7; stroke-width: 3; }
.mesa { fill: #f7f7f7; stroke: #d0d0d3; }
.mini { fill: #5c6678; font-weight: 400; text-rendering: geometricPrecision; }
.mini .tenue { fill: none; stroke: #a4a9b3; stroke-width: 1; stroke-dasharray: 2 1 3 0.5; opacity: 0.55; }
.mini .fuerte { stroke: #777f8d; opacity: 0.6; }
.mini .claro { stroke: #fff; opacity: 0.55; }
.mini .bajo { opacity: 0.3; }
.mini .azul { stroke: #6ba3d0; }
.tipos { font-weight: 400; text-rendering: geometricPrecision; }

/* Complementos */
.plugins {
  display: flex;
  flex-direction: column;
  flex: none;
  width: 40px;
  background: #e8e8e8;
  border-left: 1px solid #b5b5b5;
  border-right: 1px solid #b5b5b5;
}
.plugins button { flex: none; height: 40px; box-sizing: border-box; border-bottom: 1px solid #b5b5b5; }
.plugins .marca { height: 27px; background: #cacbcb; }
.pie { margin-top: auto; height: 10px; border-top: 1px solid #b5b5b5; }

/* Inspector */
.inspector {
  display: flex;
  flex-direction: column;
  flex: none;
  width: 203px;
  background: #e8e8e8;
  overflow: hidden;
}
.inspector > * { flex: none; }
.alinear {
  display: flex;
  align-items: center;
  gap: 11px;
  height: 26px;
  padding-left: 8px;
  background: #f6f6f6;
  border-bottom: 1px solid #b5b5b5;
}
.alinear i { width: 1px; height: 100%; margin-right: -2px; margin-left: -1px; background: #ddd; }
.trazo { stroke: #3d9bfb; stroke-width: 3; stroke-linecap: round; }
.seccion { padding-left: 7px; border-bottom: 1px solid #c9c9c9; }
.fila { display: flex; }
.rotulo { flex: none; width: 63px; line-height: 20px; white-space: nowrap; }
.campo { display: flex; flex: 1; flex-direction: column; min-width: 0; text-align: center; }
small { display: block; font-size: 9px; line-height: 14px; text-align: center; }
input[type="text"] {
  width: 100%;
  height: 19px;
  box-sizing: border-box;
  padding: 0 4px;
  border: 1px solid #c6c6c6;
  background: #f6f6f6;
  color: #222;
  font: inherit;
  outline: none;
}
.posicion { padding-top: 8px; padding-bottom: 2px; }
.posicion .fila { gap: 16px; height: 35px; }
.posicion .rotulo { margin-right: -16px; }
.voltear {
  display: flex;
  height: 19px;
  box-sizing: border-box;
  border: 1px solid #d2d2d2;
  border-radius: 4px;
  background: #f0f0f0;
}
.voltear button { flex: 1; }
.voltear button + button { border-left: 1px solid #ddd; }

.escala { display: flex; align-items: center; padding-top: 10px; padding-bottom: 11px; }
.anclas { flex: none; border: 1px solid #c2c2c2; border-radius: 3px; background: #f6f6f6; }
.fijar { display: flex; flex-direction: column; gap: 9px; margin-left: 10px; white-space: nowrap; }
.fijar div { display: flex; align-items: center; gap: 11px; }
.fijar button { flex: none; width: 19px; height: 19px; border: 1px solid #b9b9b9; border-radius: 2px; box-sizing: border-box; background: #efefef; }
.fijar .puesto { border-color: #acd0ef; background: #acd0ef; }
.fijar .alto { padding-left: 4px; }

.estilo {
  justify-content: space-between;
  height: 37px;
  padding: 3px 4px 0 10px;
  border-bottom: 1px solid #c9c9c9;
  background: #f6f6f6;
  color: #56627a;
  font-family: "Liberation Sans", Arial, sans-serif;
  font-size: 15px;
  font-weight: 400;
}

.texto { display: flex; flex-direction: column; gap: 7px; padding-top: 8px; padding-bottom: 5px; }
.lista { position: relative; display: flex; flex: 1; min-width: 0; }
select {
  appearance: none;
  width: 100%;
  height: 20px;
  padding: 0 9px;
  border: 1px solid #c2c2c2;
  border-radius: 4px;
  background: #f6f6f6;
  color: #222;
  font: inherit;
}
.junto { border-right: none; border-radius: 4px 0 0 4px; }
.chevron { position: absolute; right: 4px; top: 8px; }
.pulsador {
  display: flex;
  flex: none;
  align-items: center;
  justify-content: center;
  width: 16px;
  background: linear-gradient(#a6a9af, #858993);
}
.opciones { height: 35px; }
.opcion { flex: none; width: 28px; margin-right: 11px; }
.opcion button { height: 21px; border: 1px solid #c6c6c6; border-radius: 3px; background: #f6f6f6; box-sizing: border-box; }
.color { flex: none; width: 33px; margin-right: 10px; }
.color button { height: 21px; padding: 2px; border: 1px solid #c6c6c6; border-radius: 3px; background: #fff; box-sizing: border-box; }
.color i { width: 100%; height: 100%; background: #56627a; }
.tamano .lista { flex: none; height: 19px; margin-bottom: 2px; }

.segmentos { display: flex; flex: 1; flex-direction: column; gap: 8px; }
.segmento {
  display: flex;
  height: 21px;
  box-sizing: border-box;
  border: 1px solid #c2c2c2;
  border-radius: 4px;
  background: #f6f6f6;
  overflow: hidden;
}
.segmento button { flex: 1; }
.segmento .puesto { background: linear-gradient(#a6a9af, #858993); color: #e9e9e9; }
.apagado { fill: none; stroke: #aaa; }
.apagado button:first-child { background: #e8e8e8; }
.apagado button + button { border-left: 1px solid #e2e2e2; }
.espaciado { gap: 4px; }
.espaciado .rotulo { margin-right: -4px; }

.opacidad { display: flex; padding-top: 8px; padding-bottom: 4px; }
.opacidad input[type="text"] { flex: 1; min-width: 0; margin-left: 10px; }
input[type="range"] { appearance: none; width: 81px; height: 19px; margin: 0; background: none; }
input[type="range"]::-webkit-slider-runnable-track { height: 3px; border-radius: 2px; background: #85868b; }
input[type="range"]::-webkit-slider-thumb {
  appearance: none;
  width: 12px;
  height: 12px;
  margin-top: -5px;
  border: 1px solid #c9c9c9;
  border-radius: 50%;
  background: #fafafa;
}

.linea {
  display: flex;
  align-items: center;
  gap: 8px;
  height: 24px;
  padding-left: 6px;
  border-bottom: 1px solid #b5b5b5;
  background: #f6f6f6;
}
.linea b { font-weight: 700; color: #484848; }
.exportar { justify-content: space-between; height: 31px; padding-left: 7px; color: #333; }
.exportar button { margin-right: -4px; }
.anima { height: 31px; }
.acciones { display: flex; gap: 11px; margin-left: auto; margin-right: -1px; }
.utiles {
  display: flex;
  align-items: center;
  gap: 11px;
  height: 28px;
  padding-left: 29px;
  border-bottom: 1px solid #b5b5b5;
  background: linear-gradient(90deg, #f6f6f6 50px, #e8e8e8 70px);
}
.final { display: flex; gap: 11px; margin-left: auto; margin-right: -2px; }
.disposicion { gap: 16px; margin-right: -6px; }
.disposicion button + button + button { margin-left: -4px; }
.resto { align-items: flex-start; height: 9px; border: none; overflow: hidden; }
.resto .final { gap: 14px; margin-right: 20px; }
</style>
